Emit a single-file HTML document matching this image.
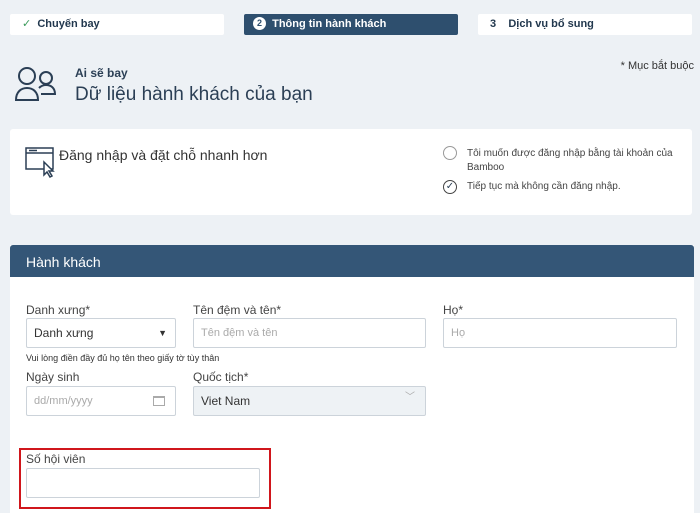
<!DOCTYPE html>
<html><head><meta charset="utf-8"><style>
*{box-sizing:border-box;margin:0;padding:0}
body{width:700px;height:513px;background:#edf1f5;font-family:"Liberation Sans",sans-serif;position:relative;overflow:hidden;color:#2b3f55}
.a{position:absolute}
.tab{position:absolute;top:14px;height:21px;width:214px;background:#fff;border-radius:2px;font-size:11px;font-weight:bold;line-height:21px;color:#22384e}
.inp{position:absolute;height:30px;border:1px solid #ccd3da;border-radius:2px;background:#fff;font-size:12px;line-height:28px;padding-left:7px}
.lbl{position:absolute;font-size:12px;color:#444}
</style></head><body>
<div class="tab" style="left:10px;padding-left:12px"><span style="color:#3a9a5a;font-weight:normal">✓</span>&nbsp;&nbsp;Chuyến bay</div>
<div class="tab" style="left:244px;background:#2e4f6e;color:#fff;padding-left:9px"><span style="display:inline-block;width:13px;height:13px;border-radius:50%;background:#fff;color:#2e4f6e;font-size:9px;line-height:13px;text-align:center;vertical-align:1px">2</span>&nbsp;&nbsp;Thông tin hành khách</div>
<div class="tab" style="left:478px;padding-left:12px">3&nbsp;&nbsp;&nbsp;&nbsp;Dịch vụ bổ sung</div>
<svg class="a" style="left:14px;top:66px" width="46" height="38" viewBox="0 0 46 38" fill="none" stroke="#2b3f55" stroke-width="2"><circle cx="13" cy="10" r="8"/><path d="M2 34c0-8 5-12 11-12s11 4 11 12z"/><circle cx="32" cy="12" r="6"/><path d="M25 22c2-2 4-3 7-3 5 0 9 3 9 9h-14"/></svg>
<div class="a" style="left:75px;top:66px;font-size:12px;font-weight:bold">Ai sẽ bay</div>
<div class="a" style="left:75px;top:84px;font-size:19px;color:#2b3f55">Dữ liệu hành khách của bạn</div>
<div class="a" style="right:6px;top:60px;font-size:11px;color:#333">* Mục bắt buộc</div>
<div class="a" style="left:10px;top:129px;width:682px;height:86px;background:#fff;border-radius:3px"></div>
<svg class="a" style="left:25px;top:147px" width="32" height="32" viewBox="0 0 32 32" fill="none" stroke="#2b3f55" stroke-width="1.5"><rect x="1" y="1" width="27" height="21"/><path d="M1 6h27M4 3.5h8"/><path d="M19 15v13l3-3 3 5 2-1-3-5h4z" fill="#fff"/></svg>
<div class="a" style="left:59px;top:147px;font-size:14px;color:#333">Đăng nhập và đặt chỗ nhanh hơn</div>
<div class="a" style="left:443px;top:146px;width:14px;height:14px;border:1px solid #999;border-radius:50%"></div>
<div class="a" style="left:467px;top:147px;font-size:10px;color:#444;line-height:14px;width:230px">Tôi muốn được đăng nhập bằng tài khoản của<br>Bamboo</div>
<div class="a" style="left:443px;top:180px;width:14px;height:14px;border:1px solid #444;border-radius:50%;font-size:10px;line-height:12px;text-align:center">✓</div>
<div class="a" style="left:467px;top:181px;font-size:10px;color:#444">Tiếp tục mà không cần đăng nhập.</div>
<div class="a" style="left:10px;top:245px;width:684px;height:268px;background:#fff"></div>
<div class="a" style="left:10px;top:245px;width:684px;height:32px;background:#345677;border-radius:3px 3px 0 0;color:#fff;font-size:14px;line-height:34px;padding-left:16px">Hành khách</div>
<div class="lbl" style="left:26px;top:303px">Danh xưng*</div>
<div class="lbl" style="left:193px;top:303px">Tên đệm và tên*</div>
<div class="lbl" style="left:443px;top:303px">Họ*</div>
<div class="inp" style="left:26px;top:318px;width:150px;color:#333">Danh xưng<span style="position:absolute;right:8px;font-size:9px">▼</span></div>
<div class="inp" style="left:193px;top:318px;width:233px;color:#aaa;font-size:11px">Tên đệm và tên</div>
<div class="inp" style="left:443px;top:318px;width:234px;color:#aaa;font-size:11px">Họ</div>
<div class="a" style="left:26px;top:353px;font-size:9px;color:#333">Vui lòng điền đầy đủ họ tên theo giấy tờ tùy thân</div>
<div class="lbl" style="left:26px;top:370px">Ngày sinh</div>
<div class="lbl" style="left:193px;top:370px">Quốc tịch*</div>
<div class="inp" style="left:26px;top:386px;width:150px;color:#aaa;font-size:11px">dd/mm/yyyy<span style="position:absolute;right:10px;top:9px;width:12px;height:10px;border:1px solid #aaa;border-top-width:2px"></span></div>
<div class="inp" style="left:193px;top:386px;width:233px;background:#eef2f5;color:#333">Viet Nam<span style="position:absolute;right:10px;top:-3px;color:#aaa;font-size:10px">﹀</span></div>
<div class="a" style="left:19px;top:448px;width:252px;height:61px;border:2px solid #d0161c"></div>
<div class="lbl" style="left:26px;top:452px">Số hội viên</div>
<div class="inp" style="left:26px;top:468px;width:234px"></div>
</body></html>
